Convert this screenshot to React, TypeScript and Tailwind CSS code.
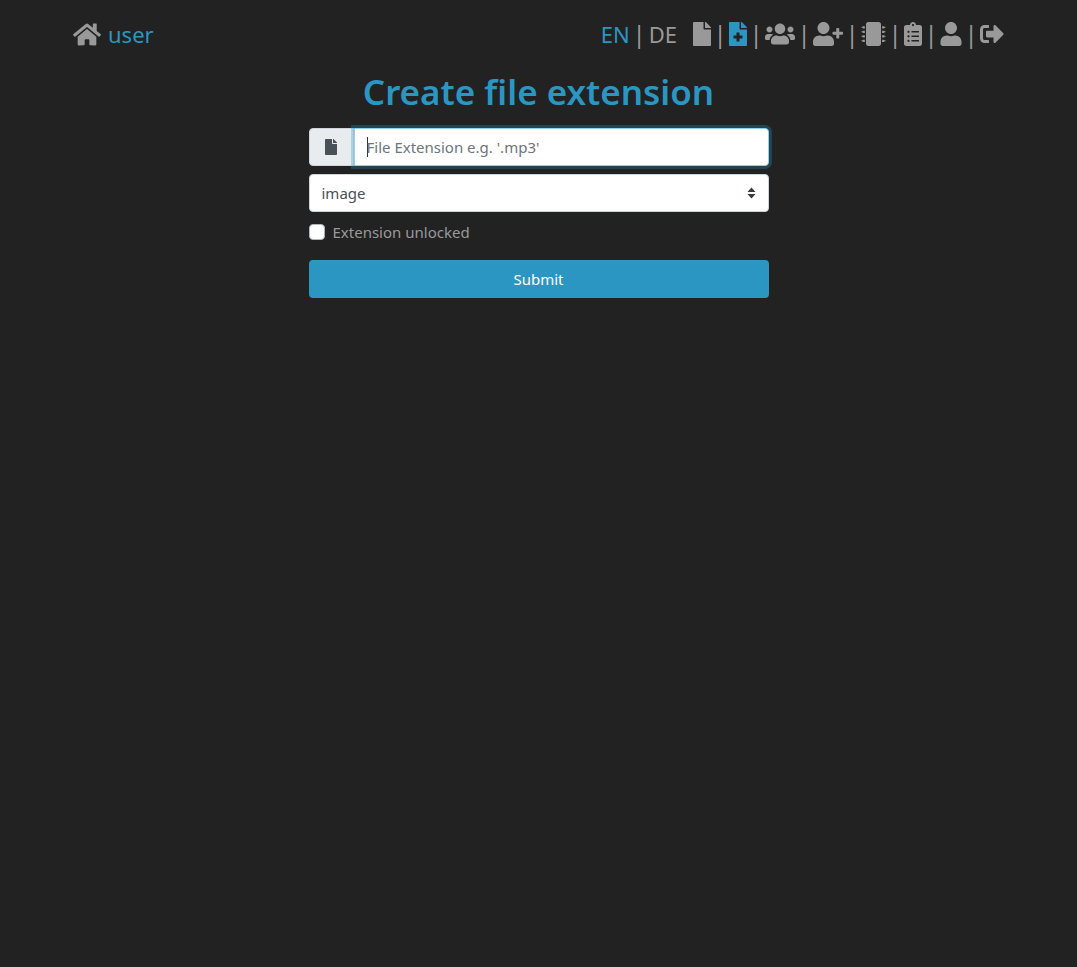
import { ReactNode } from 'react';
import {
  FaClipboardList,
  FaFile,
  FaFileMedical,
  FaHome,
  FaMicrochip,
  FaSignOutAlt,
  FaUser,
  FaUserPlus,
  FaUsers,
} from 'react-icons/fa';

const Sep = () => <span className="w-[18px] text-center text-[24px] leading-none text-[#999]">|</span>;

function NavIcon({ children, active }: { children: ReactNode; active?: boolean }) {
  return <span className={active ? 'flex text-[#2b96c2]' : 'flex text-[#999]'}>{children}</span>;
}

export default function App() {
  return (
    <div className="min-h-[967px] bg-[#222222] font-['Noto_Sans','Open_Sans',sans-serif] text-[#999]">
      <nav className="flex h-[68px] items-center justify-between px-[73px]">
        <div className="flex items-center gap-[7px]">
          <FaHome className="h-[25px] w-[28px] text-[#999]" />
          <span className="text-[22px] text-[#2b96c2]">user</span>
        </div>
        <div className="flex items-center">
          <span className="text-[22px] text-[#2b96c2]">EN</span>
          <span className="w-[19px] text-center text-[24px] leading-none">|</span>
          <span className="mr-4 text-[22px] text-[#999]">DE</span>
          <NavIcon><FaFile className="h-6 w-[18px]" /></NavIcon>
          <Sep />
          <NavIcon active><FaFileMedical className="h-6 w-[18px]" /></NavIcon>
          <Sep />
          <NavIcon><FaUsers className="h-6 w-[30px]" /></NavIcon>
          <Sep />
          <NavIcon><FaUserPlus className="h-6 w-[30px]" /></NavIcon>
          <Sep />
          <NavIcon><FaMicrochip className="h-6 w-[25px]" /></NavIcon>
          <Sep />
          <NavIcon><FaClipboardList className="h-6 w-[18px]" /></NavIcon>
          <Sep />
          <NavIcon><FaUser className="h-6 w-[22px]" /></NavIcon>
          <Sep />
          <NavIcon><FaSignOutAlt className="h-6 w-6" /></NavIcon>
        </div>
      </nav>

      <main className="mx-auto flex w-[460px] flex-col">
        <h1 className="mb-3 text-center text-[35px] leading-[48px] font-semibold whitespace-nowrap text-[#2b96c2]">
          Create file extension
        </h1>

        <div className="flex h-[38px] rounded-[4px]">
          <span className="flex w-[45px] items-center justify-center rounded-l-[4px] border border-[#ced4da] bg-[#e9ecef] text-[#495057]">
            <FaFile className="h-4 w-3" />
          </span>
          <div className="flex flex-1 items-center rounded-r-[4px] border border-[#8fd0ea] bg-white pl-3 text-[15px] text-[#6c757d] shadow-[0_0_0_3px_rgba(43,150,194,0.3)]">
            <span className="mr-[-1px] h-[20px] w-px bg-[#333]" />
            File Extension e.g. '.mp3'
          </div>
        </div>

        <div className="mt-2 flex h-[38px] items-center justify-between rounded-[4px] border border-[#ced4da] bg-white pr-3 pl-3 text-[15px] text-[#495057]">
          <span>image</span>
          <svg width="9" height="12" viewBox="0 0 9 12" fill="#343a40">
            <path d="M4.5 0.5 8.5 5H0.5Z" />
            <path d="M4.5 11.5 8.5 7H0.5Z" />
          </svg>
        </div>

        <label className="mt-[10px] flex h-5 items-center text-[15px] text-[#999]">
          <span className="mr-2 h-4 w-4 rounded-[4px] border border-[#adb5bd] bg-white" />
          Extension unlocked
        </label>

        <button className="mt-[18px] h-[38px] rounded-[4px] bg-[#2b96c2] text-[15px] text-white">
          Submit
        </button>
      </main>
    </div>
  );
}
